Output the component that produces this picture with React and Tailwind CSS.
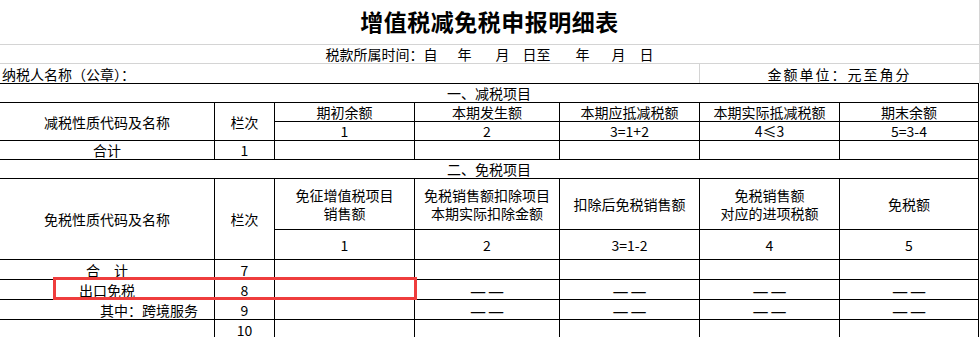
import React from 'react';
import clsx from 'clsx';

const COLS = 'grid grid-cols-[215px_60px_140px_145px_140px_140px_139px]';

function Cell({ children, className }) {
  return (
    <div className={clsx('flex items-center justify-center border-r border-b border-black text-center', className)}>
      {children}
    </div>
  );
}

function Dash() {
  return (
    <span className="flex gap-[2px] text-[18px] leading-none">
      <span>—</span>
      <span>—</span>
    </span>
  );
}

export default function App() {
  return (
    <div className="relative w-[980px] h-[337px] overflow-hidden bg-white text-black text-[14px] leading-none font-['Noto_Sans_CJK_SC',sans-serif]">
      {/* top sheet rows with light gridlines */}
      <div className="w-[980px] border-r border-[#d4d4d4]">
        <div className="h-[45px] flex items-center justify-center border-b border-[#d4d4d4] pb-[2px]">
          <h1 className="text-[23px] font-bold tracking-[0.5px]">增值税减免税申报明细表</h1>
        </div>
        <div className="h-[19px] flex items-center justify-center border-b border-[#d4d4d4]">
          <span>税款所属时间：自</span>
          <span className="ml-[20px]">年</span>
          <span className="ml-[24px]">月</span>
          <span className="ml-[13px]">日至</span>
          <span className="ml-[25px]">年</span>
          <span className="ml-[22px]">月</span>
          <span className="ml-[14px]">日</span>
        </div>
        <div className="h-[19px] flex">
          <div className="w-[700px] flex items-center pl-[2px] border-r border-[#d4d4d4]">纳税人名称（公章）：</div>
          <div className="flex-1 flex items-center justify-center tracking-[2px]">金额单位：元至角分</div>
        </div>
      </div>

      <div className="w-[979px] border-t border-black">
        {/* 一、减税项目 */}
        <Cell className="h-[19px]">一、减税项目</Cell>
        <div className={clsx(COLS, 'grid-rows-[19px_19px]')}>
          <Cell className="row-span-2">减税性质代码及名称</Cell>
          <Cell className="row-span-2">栏次</Cell>
          <Cell>期初余额</Cell>
          <Cell>本期发生额</Cell>
          <Cell>本期应抵减税额</Cell>
          <Cell>本期实际抵减税额</Cell>
          <Cell>期末余额</Cell>
          <Cell>1</Cell>
          <Cell>2</Cell>
          <Cell>3=1+2</Cell>
          <Cell>4≤3</Cell>
          <Cell>5=3-4</Cell>
        </div>
        <div className={clsx(COLS, 'grid-rows-[19px]')}>
          <Cell>合计</Cell>
          <Cell>1</Cell>
          <Cell />
          <Cell />
          <Cell />
          <Cell />
          <Cell />
        </div>

        {/* 二、免税项目 */}
        <Cell className="h-[19px]">二、免税项目</Cell>
        <div className={clsx(COLS, 'grid-rows-[51px_30px] leading-[18px]')}>
          <Cell className="row-span-2">免税性质代码及名称</Cell>
          <Cell className="row-span-2">栏次</Cell>
          <Cell>免征增值税项目<br />销售额</Cell>
          <Cell>免税销售额扣除项目<br />本期实际扣除金额</Cell>
          <Cell>扣除后免税销售额</Cell>
          <Cell>免税销售额<br />对应的进项税额</Cell>
          <Cell>免税额</Cell>
          <Cell>1</Cell>
          <Cell>2</Cell>
          <Cell>3=1-2</Cell>
          <Cell>4</Cell>
          <Cell>5</Cell>
        </div>
        <div className={clsx(COLS, 'grid-rows-[20px_20px_20px_20px]')}>
          <Cell>合　计</Cell>
          <Cell>7</Cell>
          <Cell />
          <Cell />
          <Cell />
          <Cell />
          <Cell />

          <Cell>出口免税</Cell>
          <Cell>8</Cell>
          <Cell />
          <Cell><Dash /></Cell>
          <Cell><Dash /></Cell>
          <Cell><Dash /></Cell>
          <Cell><Dash /></Cell>

          <Cell className="justify-start pl-[100px]">其中：跨境服务</Cell>
          <Cell>9</Cell>
          <Cell />
          <Cell><Dash /></Cell>
          <Cell><Dash /></Cell>
          <Cell><Dash /></Cell>
          <Cell><Dash /></Cell>

          <Cell />
          <Cell>10</Cell>
          <Cell />
          <Cell />
          <Cell />
          <Cell />
          <Cell />
        </div>
      </div>

      {/* highlight box */}
      <div className="absolute left-[53px] top-[277px] w-[364px] h-[23px] border-[3px] border-[#ef3d3d]" />
    </div>
  );
}
